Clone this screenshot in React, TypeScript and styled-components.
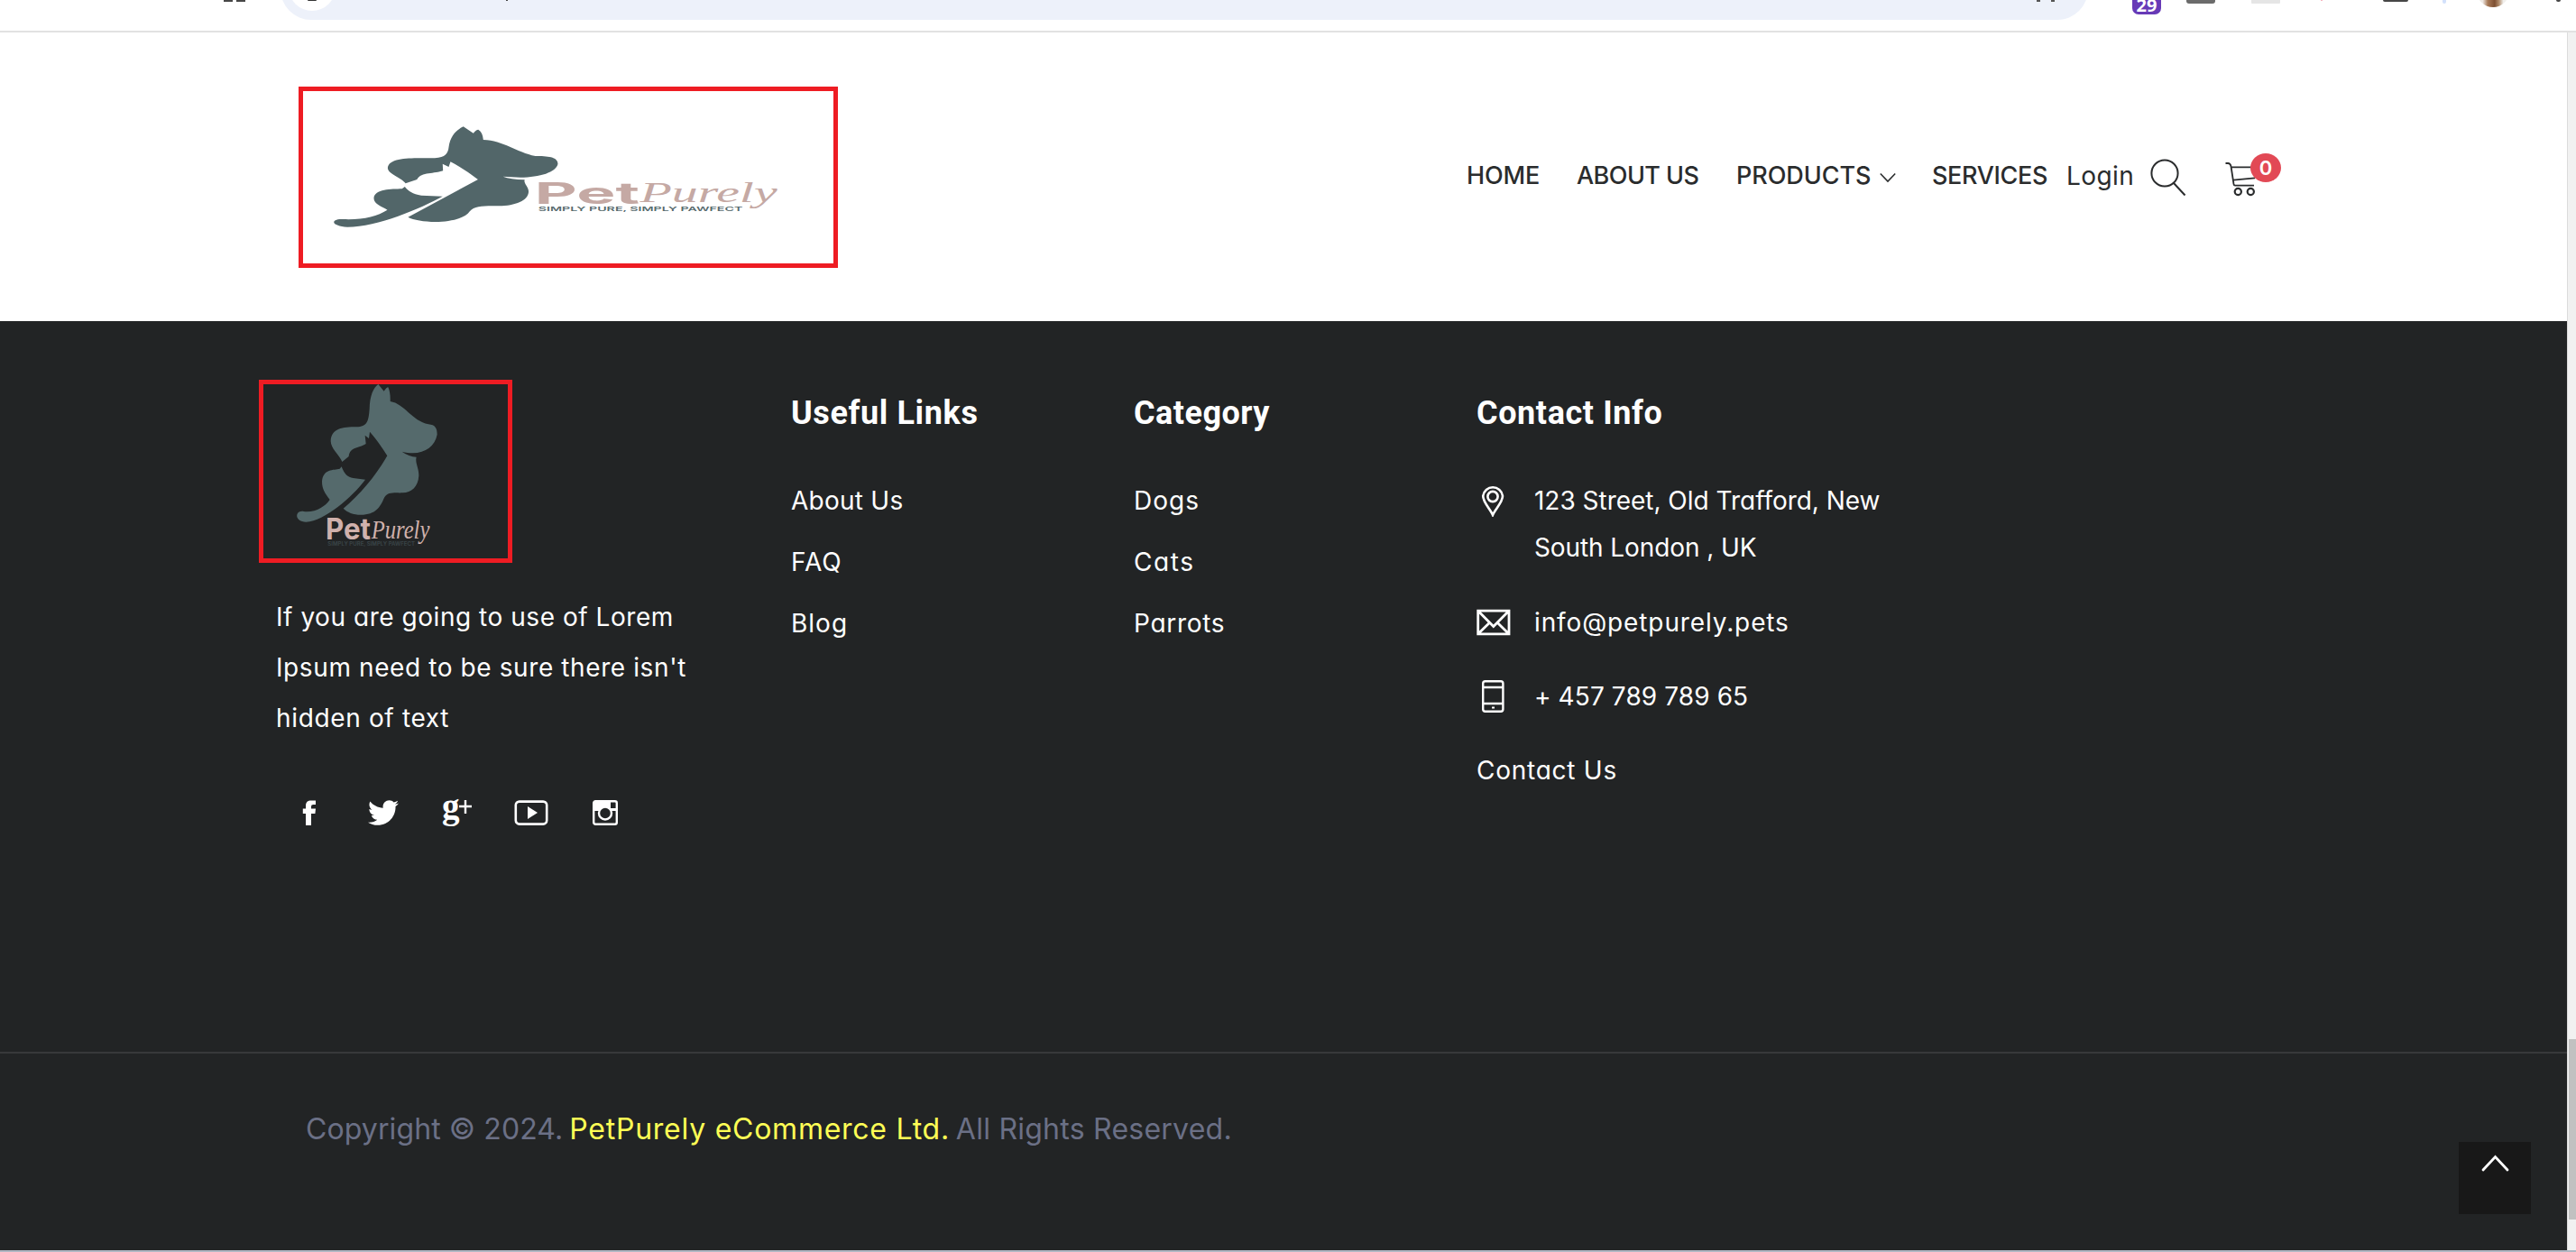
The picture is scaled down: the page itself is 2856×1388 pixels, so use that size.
import React from "react";
import styled, { createGlobalStyle } from "styled-components";
import { FaTwitter } from "react-icons/fa";

const GlobalStyle = createGlobalStyle`
  * { box-sizing: border-box; }
  body { margin: 0; background: #fff; overflow: hidden; }
  p, h4, ul { margin: 0; padding: 0; }
  ul { list-style: none; }
  svg { display: block; flex: none; }
`;

const Screen = styled.div`
  width: 2856px;
  height: 1388px;
  display: flex;
  flex-direction: column;
  overflow: hidden;
  font-family: Inter, "Open Sans", sans-serif;
  font-feature-settings: "cv11";
  font-size: 28px;
`;

/* Browser chrome */
const BrowserBar = styled.div`
  position: relative;
  height: 36px;
  flex: none;
  border-bottom: 2px solid #e2e2e2;
  overflow: hidden;
`;
const AddressBar = styled.div`
  position: absolute;
  left: 311px;
  top: -46px;
  width: 2004px;
  height: 68px;
  border-radius: 34px;
  background: #edf1fa;
`;
const SiteInfo = styled.div`
  position: absolute;
  left: 9px;
  top: 6px;
  width: 52px;
  height: 52px;
  border-radius: 50%;
  background: #fff;
`;
const Chip = styled.div<{ $x: number; $w: number; $h: number; $c: string; $r?: number }>`
  position: absolute;
  top: 0;
  left: ${(p) => p.$x}px;
  width: ${(p) => p.$w}px;
  height: ${(p) => p.$h}px;
  background: ${(p) => p.$c};
  border-radius: 0 0 ${(p) => p.$r ?? 0}px ${(p) => p.$r ?? 0}px;
`;
const CountChip = styled(Chip)`
  display: flex;
  align-items: flex-end;
  justify-content: center;
  overflow: hidden;
  color: #fff;
  font: 700 20px/15px "Open Sans", sans-serif;
  padding-bottom: 3px;
`;
const Avatar = styled.div`
  position: absolute;
  left: 2746px;
  top: -28px;
  width: 36px;
  height: 36px;
  border-radius: 50%;
  background: linear-gradient(90deg, #eee9e4 18%, #a87a58 34%, #7d4f32 55%, #b08c6c 68%, #f1efec 82%);
`;

/* Page */
const Viewport = styled.div`
  display: flex;
  height: 1350px;
  flex: none;
`;
const Page = styled.div`
  width: 2846px;
  display: flex;
  flex-direction: column;
`;
const Scrollbar = styled.div`
  width: 10px;
  background: #f1f1f1;
  border-left: 1px solid #dcdcdc;
  padding: 1116px 0 0 1px;
`;
const Thumb = styled.div`
  height: 200px;
  background: #c1c1c1;
`;
const WindowEdge = styled.div`
  height: 2px;
  flex: none;
  background: #b0b7c3;
`;

const Header = styled.header`
  height: 320px;
  flex: none;
  display: flex;
  align-items: center;
  padding-left: 331px;
  color: #2a2c2d;
`;
const LogoFrame = styled.div<{ $w: number; $h: number }>`
  width: ${(p) => p.$w}px;
  height: ${(p) => p.$h}px;
  border: 5px solid #ee1c23;
  overflow: hidden;
  flex: none;
`;
const Nav = styled.nav`
  display: flex;
  align-items: center;
  margin-left: 697px;
  padding-bottom: 3px;
`;
const NavItem = styled.a<{ $w: number; $ls: number; $light?: boolean }>`
  width: ${(p) => p.$w}px;
  font-size: ${(p) => (p.$light ? 28 : 27)}px;
  letter-spacing: ${(p) => p.$ls}px;
  font-weight: ${(p) => (p.$light ? 400 : 500)};
  line-height: 44px;
  padding-top: 1px;
  white-space: nowrap;
`;
const IconSlot = styled.span<{ $w: number; $top?: number }>`
  position: relative;
  display: block;
  width: ${(p) => p.$w}px;
  padding-top: ${(p) => p.$top ?? 0}px;
`;
const CartBadge = styled.span`
  position: absolute;
  left: 29px;
  top: 1px;
  width: 34px;
  height: 32px;
  border-radius: 50%;
  background: #e24955;
  color: #fff;
  font-size: 22px;
  font-weight: 600;
  line-height: 32px;
  text-align: center;
`;

const Footer = styled.footer`
  flex: 1;
  background: #222425;
  color: #fff;
  display: flex;
  flex-direction: column;
`;
const Columns = styled.div`
  height: 810px;
  display: flex;
  padding: 65px 0 0 287px;
`;
const Column = styled.section<{ $w: number; $top?: number }>`
  width: ${(p) => p.$w}px;
  padding-top: ${(p) => p.$top ?? 0}px;
`;
const About = styled.p`
  margin: 32px 0 0 19px;
  line-height: 56px;
`;
const Line = styled.span<{ $ls: number }>`
  display: block;
  white-space: nowrap;
  letter-spacing: ${(p) => p.$ls}px;
`;
const Social = styled.div`
  display: flex;
  margin: 59px 0 0 15px;
`;
const SocialLink = styled.a`
  width: 82px;
  height: 36px;
  display: flex;
  align-items: center;
  justify-content: center;
`;
const Heading = styled.h4<{ $ls: number }>`
  font: 700 36px/48px Roboto, sans-serif;
  letter-spacing: ${(p) => p.$ls}px;
  margin-bottom: 39px;
`;
const LinkItem = styled.li<{ $ls: number }>`
  line-height: 68px;
  letter-spacing: ${(p) => p.$ls}px;
`;
const ContactList = styled.ul`
  display: flex;
  flex-direction: column;
  gap: 30px;
  margin-top: 47px;
`;
const ContactItem = styled.li`
  display: flex;
  line-height: 52px;

  &:first-child { margin-bottom: 1px; }
`;
const ContactIcon = styled.span`
  width: 64px;
  padding-top: 8px;
`;
const Bottom = styled.div`
  flex: 1;
  display: flex;
  align-items: flex-start;
  justify-content: space-between;
  border-top: 2px solid #38393b;
  padding: 59px 40px 0 339px;
`;
const Copyright = styled.p`
  display: flex;
  font-size: 32px;
  line-height: 50px;
  color: #6b7086;
`;
const Piece = styled.span<{ $ls: number; $ml?: number; $c?: string }>`
  letter-spacing: ${(p) => p.$ls}px;
  margin-left: ${(p) => p.$ml ?? 0}px;
  color: ${(p) => p.$c ?? "inherit"};
  white-space: nowrap;
`;
const ToTop = styled.button`
  width: 80px;
  height: 80px;
  margin-top: 39px;
  padding: 13px 0 0 25px;
  border: 0;
  background: #181818;
  display: flex;
  align-items: flex-start;
`;

const WideLogo = () => (
  <svg width="588" height="191" viewBox="40.6 48 1487 573" preserveAspectRatio="none">
    <g fill="#526669">
      <path d="M490 166L518 188Q526 176 532 176Q544 184 546 210C602 212 640 252 692 264C725 264 755 266 755 290C750 318 705 334 650 335L601 332Q622 342 662 343C658 354 673 366 673 382C673 412 635 430 590 430C550 430 522 428 508 448C495 472 450 483 412 483C380 482 350 477 335 467L531 342Q490 305 454 283L449 300L432 290L433 313C410 324 372 316 360 342L328 355C316 334 278 325 278 303C282 264 360 272 410 271C440 269 447 255 449 235C453 195 472 177 490 166Z" />
      <path d="M326 366C335 380 348 391 372 395L432 398C370 438 250 500 165 500C116 496 118 472 152 474C205 477 248 465 277 443C262 431 239 424 239 404C241 374 288 374 318 373Z" />
    </g>
    <g fill="#c5a9a4">
      <text x="690" y="422" fontSize="98" fontWeight="700" textLength="294" lengthAdjust="spacingAndGlyphs">Pet</text>
      <text x="985" y="416" fontFamily="Liberation Serif, serif" fontStyle="italic" fontSize="94" textLength="385" lengthAdjust="spacingAndGlyphs">Purely</text>
    </g>
    <text x="700" y="446" fill="#566a6d" fontSize="20" fontWeight="600" textLength="573" lengthAdjust="spacingAndGlyphs">SIMPLY PURE, SIMPLY PAWFECT</text>
  </svg>
);

const FooterLogo = () => (
  <svg width="271" height="193" viewBox="36 48 813 579">
    <g fill="#556a6c">
      <path d="M418 48L437 71Q446 58 451 58Q459 75 458 105C505 112 530 170 585 181C608 183 614 195 614 215C605 262 560 288 497 272Q520 289 545 290C540 310 553 325 553 352C551 390 528 409 500 409C470 410 450 405 438 425C425 455 410 482 360 482C335 482 315 474 302 461C360 412 410 352 448 286Q420 240 390 206L387 228L374 218L377 246C350 263 325 255 320 288L298 306C290 285 261 263 260 237C262 195 300 190 345 190C382 190 386 170 389 130C390 85 402 60 418 48Z" />
      <path d="M296 322C306 348 316 357 335 360L375 365C330 425 240 502 178 506C138 506 140 466 170 471C210 475 240 456 257 432C240 410 231 395 231 372C234 328 270 334 290 329Z" />
    </g>
    <g fill="#d0b1ac">
      <text x="243" y="563" fontSize="96" fontWeight="700" textLength="150" lengthAdjust="spacingAndGlyphs">Pet</text>
      <text x="395" y="560" fontFamily="Liberation Serif, serif" fontStyle="italic" fontSize="88" textLength="194" lengthAdjust="spacingAndGlyphs">Purely</text>
    </g>
    <text x="250" y="586" fill="#3b4649" fontSize="17" fontWeight="600" textLength="290" lengthAdjust="spacingAndGlyphs">SIMPLY PURE, SIMPLY PAWFECT</text>
  </svg>
);

const SearchIcon = () => (
  <svg width="42" height="42" viewBox="0 0 42 42" fill="none" stroke="#2a2c2d" strokeWidth="2">
    <circle cx="17" cy="16" r="14.6" />
    <path d="M27 27L39.5 40.5" />
  </svg>
);
const CartIcon = () => (
  <svg width="42" height="52" viewBox="0 0 42 52" fill="none" stroke="#2a2c2d" strokeWidth="1.8">
    <path d="M1.5 12H4Q7 12 7.6 16L10.5 35Q10.8 36.6 12 36.6H33M7.6 16.3H34M10 30.6L34 28.4" />
    <circle cx="15.3" cy="43.5" r="3.6" strokeWidth="2.2" />
    <circle cx="29.3" cy="43.5" r="3.6" strokeWidth="2.2" />
  </svg>
);
const PinIcon = () => (
  <svg width="36" height="36" viewBox="0 0 36 36" fill="none" stroke="#fff" strokeWidth="2.6">
    <path d="M18 34C15 27 7.2 20 7.2 12.8A11 11 0 0 1 29 12.8C29 20 21 27 18 34Z" />
    <circle cx="18" cy="13.5" r="5.6" />
  </svg>
);
const MailIcon = () => (
  <svg width="38" height="36" viewBox="0 0 38 36" fill="none" stroke="#fff" strokeWidth="2.8">
    <path d="M1.7 5.2H36V30.8H1.7ZM2 5.5L18.8 22.5L35.6 5.5M2 30.5L14.3 18.5M35.6 30.5L23.4 18.5" />
  </svg>
);
const PhoneIcon = () => (
  <svg width="36" height="36" viewBox="0 0 36 36" fill="none" stroke="#fff" strokeWidth="2.4">
    <rect x="7.2" y="1.2" width="22.2" height="33.6" rx="2.5" />
    <path d="M7 8H29.4M7 26H29.4" />
    <rect x="17" y="29.5" width="3" height="2" fill="#fff" stroke="none" />
  </svg>
);
const FacebookIcon = () => (
  <svg width="16" height="28" viewBox="0 0 16 28" fill="#fff">
    <path d="M4 28V15H.8V9.5H4V6.5C4 2 6.2.4 10 .4H15V5H12.2Q10 5 10 7V9.5H15L14.4 15H10V28Z" />
  </svg>
);
const GooglePlusIcon = () => (
  <svg width="34" height="40" viewBox="0 0 34 40" fill="#fff">
    <text x="0" y="26" fontFamily="Liberation Serif, serif" fontWeight="700" fontSize="39">g</text>
    <path d="M19 13H33M26 6V21" stroke="#fff" strokeWidth="2.4" />
  </svg>
);
const YoutubeIcon = () => (
  <svg width="38" height="28" viewBox="0 0 38 28">
    <rect x="1.8" y="1.6" width="34.4" height="25" rx="4" fill="none" stroke="#fff" strokeWidth="2.6" />
    <path d="M15 7L26 14L15 21Z" fill="#fff" />
  </svg>
);
const InstagramIcon = () => (
  <svg width="28" height="28" viewBox="0 0 28 28">
    <rect x="1.2" y="1.2" width="25.6" height="25.6" rx="2" fill="none" stroke="#fff" strokeWidth="2.4" />
    <path d="M1 2H20V9H27V12H1Z" fill="#fff" />
    <circle cx="14" cy="14.5" r="7" fill="#222425" stroke="#fff" strokeWidth="2.4" />
  </svg>
);

const usefulLinks: [string, number][] = [["About Us", 0.25], ["FAQ", 1], ["Blog", 1]];
const categories: [string, number][] = [["Dogs", 1], ["Cats", 1.6], ["Parrots", 0.7]];

export default function App() {
  return (
    <Screen>
      <GlobalStyle />
      <BrowserBar>
        <Chip $x={248} $w={10} $h={2} $c="#474747" />
        <Chip $x={262} $w={10} $h={2} $c="#474747" />
        <AddressBar>
          <SiteInfo />
        </AddressBar>
        <Chip $x={341} $w={10} $h={1} $c="#333" $r={1} />
        <Chip $x={561} $w={2} $h={1} $c="#444" />
        <Chip $x={2258} $w={4} $h={2} $c="#555" />
        <Chip $x={2274} $w={4} $h={2} $c="#555" />
        <CountChip $x={2364} $w={32} $h={16} $c="#673ab7" $r={7}>29</CountChip>
        <Chip $x={2424} $w={32} $h={4} $c="#6b6b6b" $r={3} />
        <Chip $x={2496} $w={32} $h={4} $c="#e5e5e5" $r={1} />
        <Chip $x={2573} $w={2} $h={1} $c="#f7b5c0" />
        <Chip $x={2642} $w={28} $h={2} $c="#474747" $r={2} />
        <Chip $x={2708} $w={4} $h={4} $c="#d3e1fb" $r={2} />
        <Avatar />
        <Chip $x={2834} $w={5} $h={2} $c="#474747" $r={2} />
      </BrowserBar>
      <Viewport>
        <Page>
          <Header>
            <LogoFrame $w={598} $h={201}>
              <WideLogo />
            </LogoFrame>
            <Nav>
              <NavItem $w={122} $ls={-0.15}>HOME</NavItem>
              <NavItem $w={177} $ls={-0.55}>ABOUT US</NavItem>
              <NavItem $w={159} $ls={-0.06}>PRODUCTS</NavItem>
              <IconSlot $w={58} $top={4}>
                <svg width="18" height="12" viewBox="0 0 18 12" fill="none" stroke="#2a2c2d" strokeWidth="1.6">
                  <path d="M.8 1.5L9 10L17.2 1.5" />
                </svg>
              </IconSlot>
              <NavItem $w={149} $ls={-0.33}>SERVICES</NavItem>
              <NavItem $w={92} $ls={0.4} $light>Login</NavItem>
              <IconSlot $w={83} $top={4}>
                <SearchIcon />
              </IconSlot>
              <IconSlot $w={66}>
                <CartIcon />
                <CartBadge>0</CartBadge>
              </IconSlot>
            </Nav>
          </Header>
          <Footer>
            <Columns>
              <Column $w={590}>
                <LogoFrame $w={281} $h={203}>
                  <FooterLogo />
                </LogoFrame>
                <About>
                  <Line $ls={0.54}>If you are going to use of Lorem</Line>
                  <Line $ls={0.6}>Ipsum need to be sure there isn't</Line>
                  <Line $ls={0.65}>hidden of text</Line>
                </About>
                <Social>
                  <SocialLink><FacebookIcon /></SocialLink>
                  <SocialLink><FaTwitter size={34} /></SocialLink>
                  <SocialLink><GooglePlusIcon /></SocialLink>
                  <SocialLink><YoutubeIcon /></SocialLink>
                  <SocialLink><InstagramIcon /></SocialLink>
                </Social>
              </Column>
              <Column $w={380} $top={13}>
                <Heading $ls={0.62}>Useful Links</Heading>
                <ul>
                  {usefulLinks.map(([t, ls]) => (
                    <LinkItem key={t} $ls={ls}>{t}</LinkItem>
                  ))}
                </ul>
              </Column>
              <Column $w={380} $top={13}>
                <Heading $ls={0.5}>Category</Heading>
                <ul>
                  {categories.map(([t, ls]) => (
                    <LinkItem key={t} $ls={ls}>{t}</LinkItem>
                  ))}
                </ul>
              </Column>
              <Column $w={520} $top={13}>
                <Heading $ls={0.6}>Contact Info</Heading>
                <ContactList>
                  <ContactItem>
                    <ContactIcon><PinIcon /></ContactIcon>
                    <div>
                      <Line $ls={-0.02}>123 Street, Old Trafford, New</Line>
                      <Line $ls={-0.09}>South London , UK</Line>
                    </div>
                  </ContactItem>
                  <ContactItem>
                    <ContactIcon><MailIcon /></ContactIcon>
                    <Line $ls={0.88}>info@petpurely.pets</Line>
                  </ContactItem>
                  <ContactItem>
                    <ContactIcon><PhoneIcon /></ContactIcon>
                    <Line $ls={0.1}>+ 457 789 789 65</Line>
                  </ContactItem>
                  <ContactItem>
                    <Line $ls={0.75}>Contact Us</Line>
                  </ContactItem>
                </ContactList>
              </Column>
            </Columns>
            <Bottom>
              <Copyright>
                <Piece $ls={0.1}>Copyright © 2024.</Piece>
                <Piece $ls={0.75} $ml={7} $c="#ffff55">PetPurely eCommerce Ltd.</Piece>
                <Piece $ls={0.24} $ml={7}>All Rights Reserved.</Piece>
              </Copyright>
              <ToTop>
                <svg width="32" height="22" viewBox="0 0 32 22" fill="none" stroke="#fff" strokeWidth="2.8" strokeLinecap="round">
                  <path d="M2 18L15.5 3.5L29 18" />
                </svg>
              </ToTop>
            </Bottom>
          </Footer>
        </Page>
        <Scrollbar>
          <Thumb />
        </Scrollbar>
      </Viewport>
      <WindowEdge />
    </Screen>
  );
}
